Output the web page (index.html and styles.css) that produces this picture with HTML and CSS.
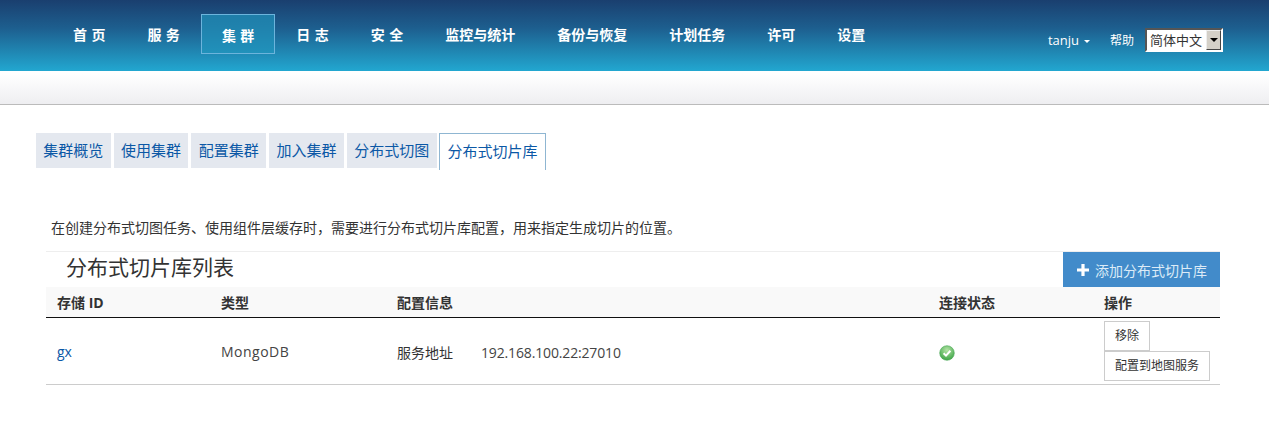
FILE: index.html
```html
<!DOCTYPE html>
<html lang="zh-CN">
<head>
<meta charset="utf-8">
<title>集群</title>
<link rel="stylesheet" href="styles.css">
</head>
<body>
<header class="topbar">
  <nav class="mainnav">
    <a class="navitem">首&nbsp;页</a>
    <a class="navitem">服&nbsp;务</a>
    <a class="navitem active">集&nbsp;群</a>
    <a class="navitem">日&nbsp;志</a>
    <a class="navitem">安&nbsp;全</a>
    <a class="navitem">监控与统计</a>
    <a class="navitem">备份与恢复</a>
    <a class="navitem">计划任务</a>
    <a class="navitem">许可</a>
    <a class="navitem">设置</a>
  </nav>
  <div class="usertools">
    <span class="user">tanju<i class="caret"></i></span>
    <span class="help">帮助</span>
    <span class="langselect"><span class="langtext">简体中文</span><span class="langbtn"><i class="langarrow"></i></span></span>
  </div>
</header>
<div class="subbar"></div>
<main class="content">
  <div class="tabs">
    <a class="tab">集群概览</a>
    <a class="tab">使用集群</a>
    <a class="tab">配置集群</a>
    <a class="tab">加入集群</a>
    <a class="tab">分布式切图</a>
    <a class="tab current">分布式切片库</a>
  </div>
  <p class="intro">在创建分布式切图任务、使用组件层缓存时，需要进行分布式切片库配置，用来指定生成切片的位置。</p>
  <section class="panel">
    <div class="panelhead">
      <h2 class="paneltitle">分布式切片库列表</h2>
      <a class="addbtn"><svg class="plus" viewBox="0 0 12 12" width="12" height="12"><path d="M4.4 0h3.2v4.4H12v3.2H7.6V12H4.4V7.6H0V4.4h4.4z" fill="#fff"/></svg>添加分布式切片库</a>
    </div>
    <table class="grid">
      <colgroup>
        <col class="c1"><col class="c2"><col class="c3"><col class="c4"><col class="c5">
      </colgroup>
      <thead>
        <tr><th>存储 ID</th><th>类型</th><th>配置信息</th><th>连接状态</th><th>操作</th></tr>
      </thead>
      <tbody>
        <tr>
          <td><a class="idlink">gx</a></td>
          <td class="dbname">MongoDB</td>
          <td><span class="cfgkey">服务地址</span><span class="cfgval">192.168.100.22:27010</span></td>
          <td>
            <svg class="ok" viewBox="0 0 16 16" width="16" height="16">
              <defs><radialGradient id="g" cx="50%" cy="30%" r="75%"><stop offset="0" stop-color="#b4e4a6"/><stop offset="1" stop-color="#35a03f"/></radialGradient></defs>
              <circle cx="8" cy="8" r="7.3" fill="url(#g)" stroke="#4aa858" stroke-width=".6"/>
              <path d="M4.6 8.2l2.4 2.4 4.4-4.8" fill="none" stroke="#fff" stroke-width="2"/>
            </svg>
          </td>
          <td class="actions"><a class="btn">移除</a><a class="btn">配置到地图服务</a></td>
        </tr>
      </tbody>
    </table>
  </section>
</main>
</body>
</html>
```
FILE: styles.css
```css
* { box-sizing: border-box; }
html, body { margin: 0; padding: 0; }
body {
  background: #fff;
  color: #333;
  font-family: "Open Sans", "Noto Sans CJK SC", sans-serif;
  font-size: 14px;
}
.topbar {
  height: 71px;
  display: flex;
  justify-content: space-between;
  background: linear-gradient(to bottom, #1a3f6f 0%, #1d5f8f 40%, #22a7d0 100%);
  padding: 14px 46px 0 52px;
}
.mainnav { display: flex; }
.navitem {
  height: 40px;
  padding: 0 20px;
  border: 1px solid transparent;
  color: #fff;
  font-weight: 700;
  font-size: 14px;
  line-height: 40px;
  word-spacing: .8px;
  white-space: nowrap;
}
.navitem.active {
  border-color: #6cb4dc;
  background: rgba(34, 150, 190, .65);
  line-height: 42px;
}
.usertools {
  display: flex;
  align-items: center;
  height: 24px;
  margin-top: 14px;
  color: #fff;
}
.user { font-size: 13px; display: flex; align-items: center; }
.caret {
  margin-left: 5px;
  border-left: 3px solid transparent;
  border-right: 3px solid transparent;
  border-top: 3px solid #fff;
  margin-top: 2px;
}
.help { font-size: 12px; margin-left: 20px; }
.langselect {
  display: flex;
  margin-left: 11px;
  width: 78px;
  height: 24px;
  background: #fff;
  border: 2px solid;
  border-color: #555 #fff #fff #555;
  color: #333;
  align-items: center;
}
.langtext { font-size: 13px; flex: 1; padding-left: 3px; white-space: nowrap; line-height: 20px; }
.langbtn {
  width: 15px;
  height: 20px;
  background: #d4d0c8;
  border: 1px solid;
  border-color: #eee #444 #444 #eee;
  display: flex;
  align-items: center;
  justify-content: center;
}
.langarrow {
  border-left: 4px solid transparent;
  border-right: 4px solid transparent;
  border-top: 4px solid #000;
}
.subbar {
  height: 34px;
  background: linear-gradient(to bottom, #fff 10%, #eeeef1);
  border-bottom: 1px solid #bbb;
}
.content { padding: 28px 49px 0 46px; }
.tabs { display: flex; gap: 3px; margin-left: -10px; align-items: flex-start; }
.tab {
  height: 35px;
  padding: 0 7.35px;
  background: #e4e8ef;
  color: #0b58a6;
  font-size: 15px;
  line-height: 34px;
  white-space: nowrap;
}
.tab.current {
  height: 37px;
  margin-left: -1px;
  padding: 0 7px 0 8px;
  background: #fff;
  border: 1px solid #8fb6d2;
  border-bottom: 0;
  line-height: 34px;
}
.intro {
  margin: 48px 0 0 5px;
  height: 24px;
  font-size: 14px;
  line-height: 20px;
}
.panel { margin-top: 9px; }
.panelhead {
  display: flex;
  justify-content: space-between;
  border-top: 1px solid #eee;
  height: 36px;
  padding-left: 20px;
}
.paneltitle {
  margin: 0;
  font-size: 21px;
  font-weight: 400;
  line-height: 30px;
}
.addbtn {
  display: flex;
  align-items: center;
  width: 157px;
  height: 35px;
  padding-left: 14px;
  background: #428bca;
  color: #dcebf7;
  font-size: 14px;
  white-space: nowrap;
}
.plus { margin-right: 6px; }
.grid {
  width: 100%;
  table-layout: fixed;
  border-collapse: collapse;
}
.c1 { width: 164px; }
.c2 { width: 176px; }
.c3 { width: 542px; }
.c4 { width: 165px; }
.c5 { width: 127px; }
.grid th {
  height: 30px;
  padding: 0 0 0 11px;
  background: #f9f9f9;
  border-bottom: 1px solid #111;
  text-align: left;
  font-size: 14px;
  font-weight: 700;
}
.grid td {
  height: 67px;
  padding: 2px 0 0 11px;
  border-bottom: 1px solid #ccc;
  font-size: 14px;
  vertical-align: middle;
}
.dbname { letter-spacing: .5px; color: #444; }
.cfgval { letter-spacing: -.15px; color: #444; }
.idlink { color: #0b58a6; }
.cfgkey { margin-right: 28px; }
.ok { display: block; margin-top: 2px; }
.grid td.actions {
  display: flex;
  flex-direction: column;
  align-items: flex-start;
  justify-content: center;
  padding-top: 0;
}
.btn {
  height: 30px;
  padding: 0 10px;
  background: #fff;
  border: 1px solid #ccc;
  font-size: 12px;
  line-height: 28px;
  white-space: nowrap;
}
```
